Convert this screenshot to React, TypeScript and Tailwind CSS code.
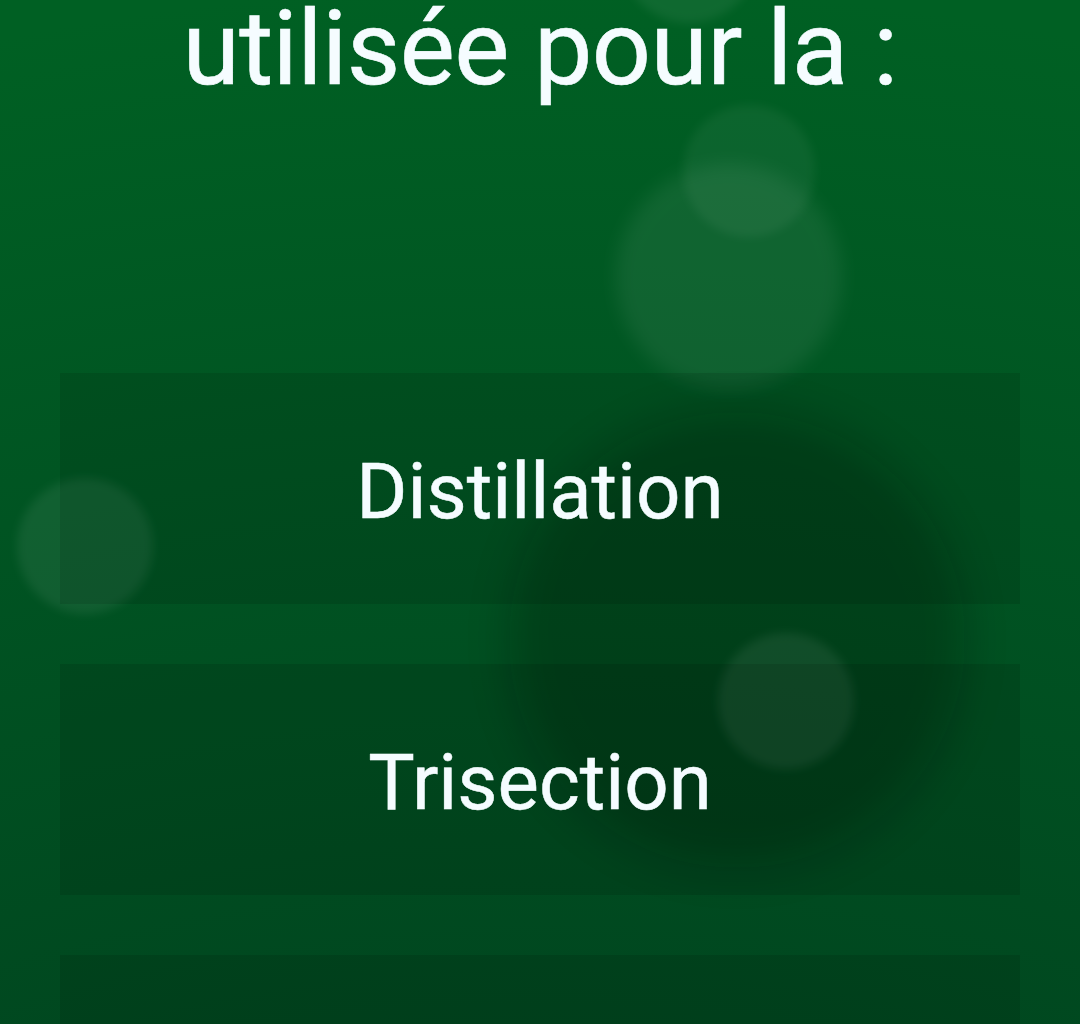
const circles = [
  { cx: 689, cy: -46, r: 69, fill: "#fff", opacity: 0.06, blur: "url(#soft)" },
  { cx: 749, cy: 171, r: 66, fill: "#fff", opacity: 0.046, blur: "url(#soft)" },
  { cx: 729, cy: 277, r: 113, fill: "#fff", opacity: 0.062, blur: "url(#medium)" },
  { cx: 737, cy: 640, r: 228, fill: "#000b05", opacity: 0.23, blur: "url(#wide)" },
  { cx: 85, cy: 546, r: 68, fill: "#fff", opacity: 0.065, blur: "url(#soft)" },
  { cx: 786, cy: 701, r: 68, fill: "#fff", opacity: 0.065, blur: "url(#soft)" },
];

const answers = ["Distillation", "Trisection", ""];

function Bokeh() {
  return (
    <svg className="absolute inset-0 h-full w-full" viewBox="0 0 1080 1024" aria-hidden="true">
      <defs>
        <filter id="soft" x="-20%" y="-20%" width="140%" height="140%">
          <feGaussianBlur stdDeviation="5" />
        </filter>
        <filter id="medium" x="-20%" y="-20%" width="140%" height="140%">
          <feGaussianBlur stdDeviation="9" />
        </filter>
        <filter id="wide" x="-20%" y="-20%" width="140%" height="140%">
          <feGaussianBlur stdDeviation="22" />
        </filter>
      </defs>
      {circles.map((c, i) => (
        <circle key={i} cx={c.cx} cy={c.cy} r={c.r} fill={c.fill} opacity={c.opacity} filter={c.blur} />
      ))}
    </svg>
  );
}

export default function App() {
  return (
    <main className="relative h-[1024px] w-[1080px] overflow-hidden bg-[radial-gradient(circle_2800px_at_540px_2700px,#00461f_59%,#005422_80%,#006023_97%)] font-['Roboto',sans-serif] text-[#f5fcff]">
      <Bokeh />
      <div className="relative flex flex-col px-[60px]">
        <h1 className="flex h-[373px] justify-center pt-px text-[104px] leading-[96px] tracking-[-0.6px] whitespace-nowrap [-webkit-text-stroke:0.6px_#f5fcff]">
          utilisée pour la :
        </h1>
        <div className="flex flex-col gap-[60px]">
          {answers.map((answer, i) => (
            <button key={i} type="button" className="h-[231px] w-full bg-black/10 pt-[7px] text-[78px] leading-[92px] [-webkit-text-stroke:0.5px_#f5fcff]">
              {answer}
            </button>
          ))}
        </div>
      </div>
    </main>
  );
}
